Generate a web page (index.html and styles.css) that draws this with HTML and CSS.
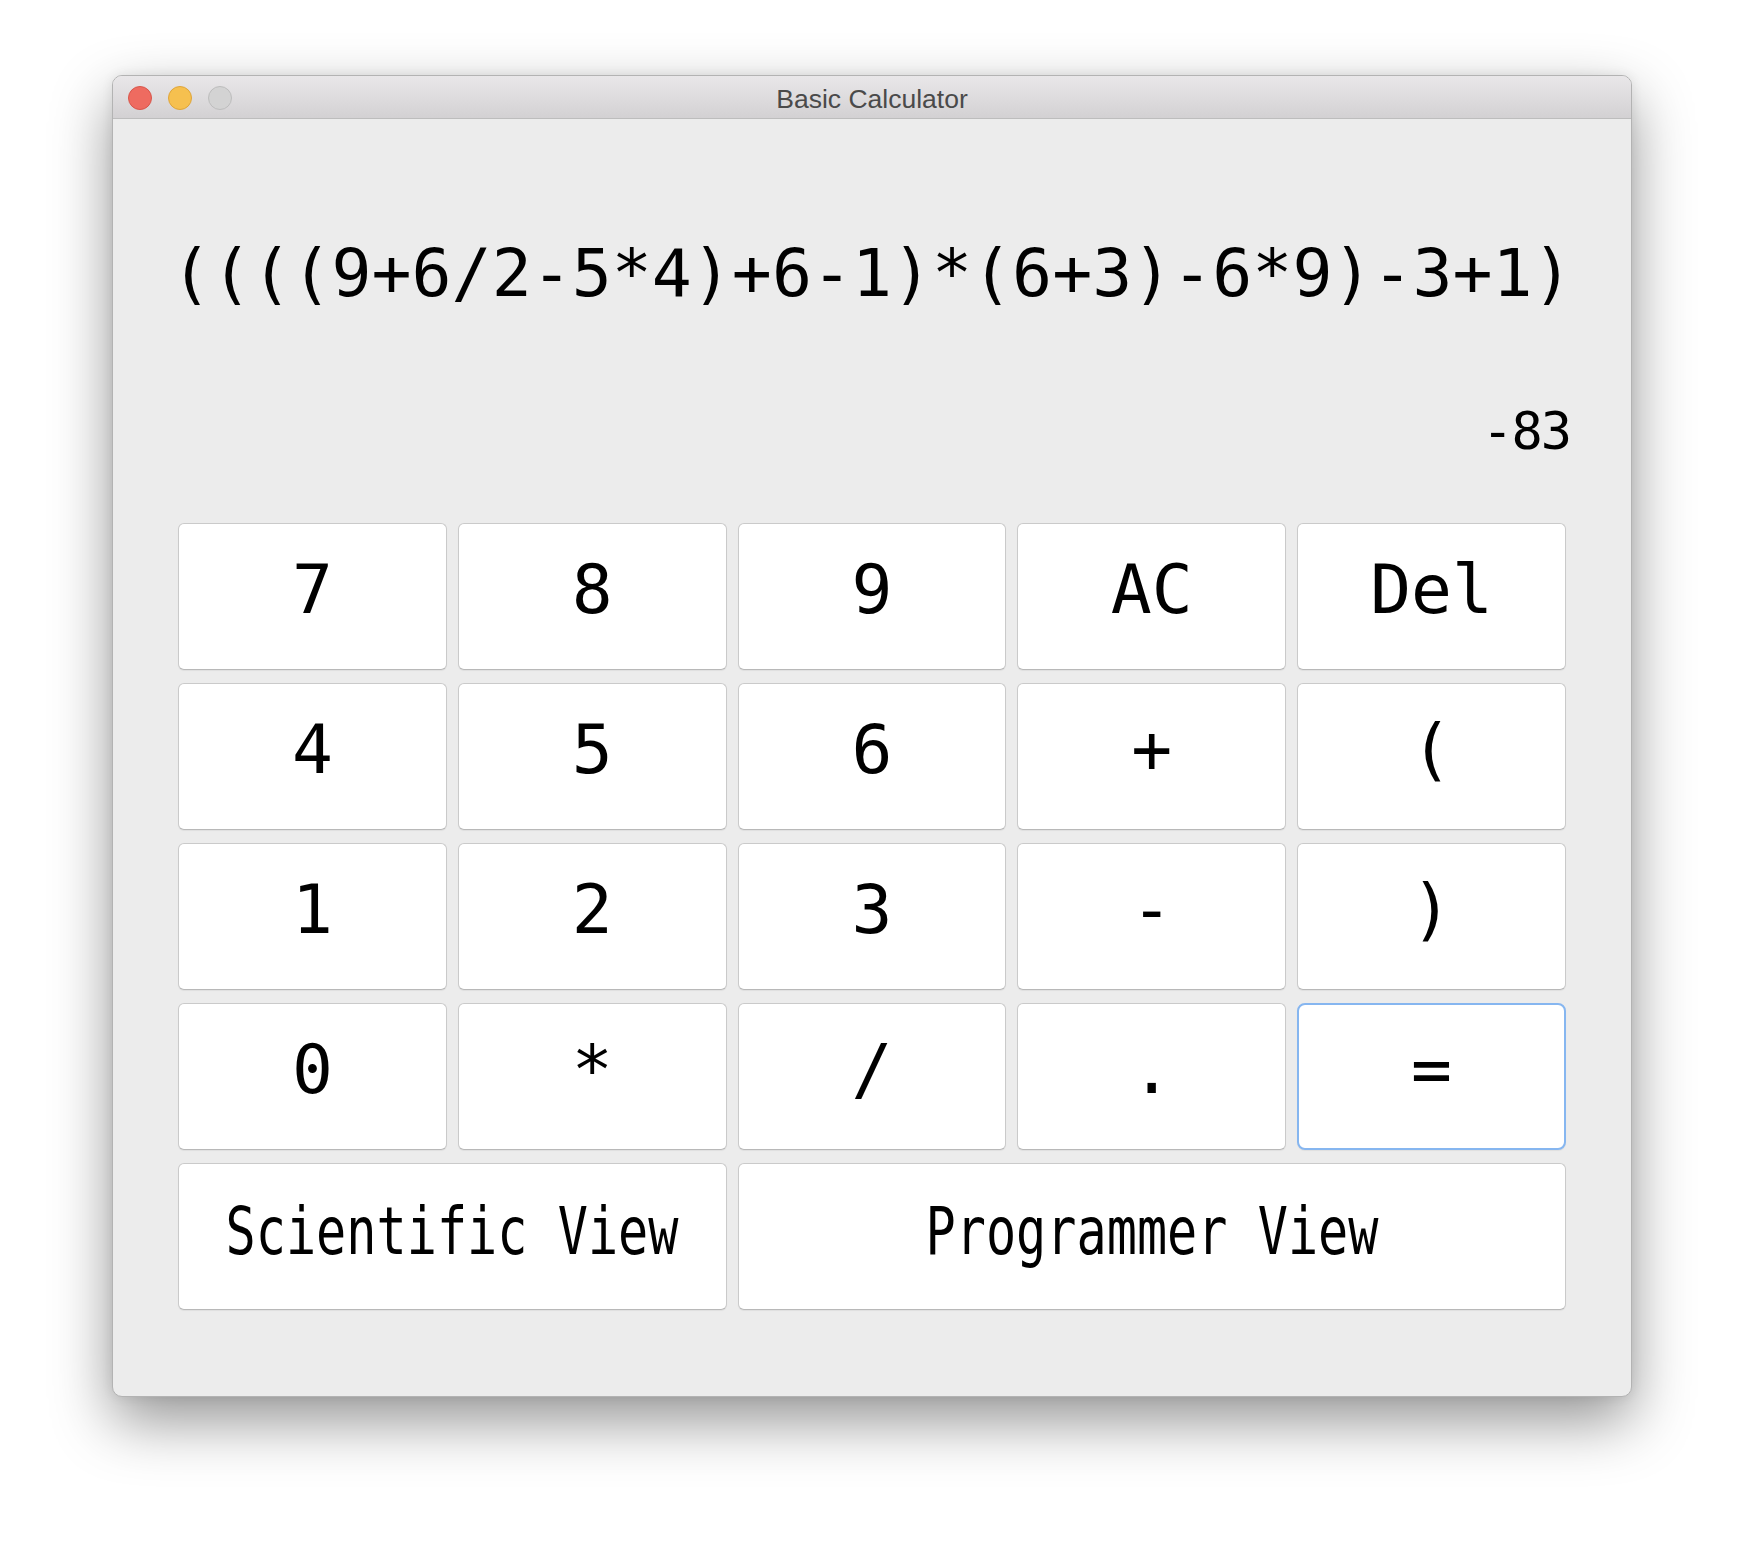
FILE: index.html
```html
<!DOCTYPE html>
<html>
<head>
<meta charset="utf-8">
<title>Basic Calculator</title>
<link rel="stylesheet" href="styles.css">
</head>
<body>
<div class="window">
  <div class="titlebar">
    <div class="lights">
      <span class="light red"></span>
      <span class="light yellow"></span>
      <span class="light gray"></span>
    </div>
    <div class="title">Basic Calculator</div>
    <div class="spacer"></div>
  </div>
  <div class="content">
    <div class="display">
      <div class="expr"><span>((((9+6/2-5*4)+6-1)*(6+3)-6*9)-3+1)</span></div>
      <div class="result">-83</div>
    </div>
    <div class="keys">
      <button class="key"><span>7</span></button>
      <button class="key"><span>8</span></button>
      <button class="key"><span>9</span></button>
      <button class="key"><span>AC</span></button>
      <button class="key"><span>Del</span></button>
      <button class="key"><span>4</span></button>
      <button class="key"><span>5</span></button>
      <button class="key"><span>6</span></button>
      <button class="key"><span>+</span></button>
      <button class="key"><span>(</span></button>
      <button class="key"><span>1</span></button>
      <button class="key"><span>2</span></button>
      <button class="key"><span>3</span></button>
      <button class="key"><span>-</span></button>
      <button class="key"><span>)</span></button>
      <button class="key"><span>0</span></button>
      <button class="key"><span>*</span></button>
      <button class="key"><span>/</span></button>
      <button class="key"><span>.</span></button>
      <button class="key focused"><span>=</span></button>
      <button class="key wide sci"><span class="narrow">Scientific View</span></button>
      <button class="key wide prog"><span class="narrow">Programmer View</span></button>
    </div>
  </div>
</div>
</body>
</html>
```

FILE: styles.css
```css
html, body {
  margin: 0;
  padding: 0;
  background: #ffffff;
}

body {
  padding: 75px 0 0 112px;
  height: 1544px;
  box-sizing: border-box;
  overflow: hidden;
}

.window {
  width: 1520px;
  box-sizing: border-box;
  border: 1px solid #b3b3b3;
  border-radius: 10px;
  background: #ececec;
  box-shadow: 0 24px 60px rgba(0, 0, 0, 0.42), 0 0 12px rgba(0, 0, 0, 0.08);
  overflow: hidden;
}

.titlebar {
  height: 42px;
  border-bottom: 1px solid #bdbdbd;
  background: linear-gradient(#e9e7e9, #d3d1d3);
  display: grid;
  grid-template-columns: 1fr auto 1fr;
  align-items: center;
}

.lights {
  display: flex;
  gap: 16px;
  padding-left: 15px;
  padding-top: 1px;
}

.light {
  width: 22px;
  height: 22px;
  border-radius: 50%;
  border: 1px solid transparent;
}

.light.red {
  background: #ee6b60;
  border-color: #d8564b;
}

.light.yellow {
  background: #f6c04f;
  border-color: #dfa53a;
}

.light.gray {
  background: #d3d3d3;
  border-color: #bdbdbd;
}

.title {
  font-family: "Liberation Sans", Arial, sans-serif;
  font-size: 26.5px;
  color: #4a4a4a;
  padding-top: 5px;
}

.content {
  padding: 0 65px 86px 65px;
}

.display {
  font-family: "DejaVu Sans Mono", monospace;
  color: #000;
}

.expr {
  padding-top: 114px;
  display: flex;
  justify-content: center;
  white-space: nowrap;
  font-size: 66.5px;
  line-height: 80px;
}

.result {
  margin-top: 88px;
  text-align: right;
  font-size: 52px;
  line-height: 60px;
  letter-spacing: -2px;
  margin-right: -4px;
}

.keys {
  margin-top: 62px;
  display: grid;
  grid-template-columns: repeat(5, 1fr);
  grid-auto-rows: 147px;
  column-gap: 11px;
  row-gap: 13px;
}

.key {
  margin: 0;
  padding: 0 0 14px 0;
  background: #ffffff;
  border: 1px solid #cacaca;
  border-bottom-color: #b8b8b8;
  border-radius: 6px;
  box-shadow: 0 1px 1px rgba(0, 0, 0, 0.06);
  font-family: "DejaVu Sans Mono", monospace;
  font-size: 68px;
  line-height: 68px;
  color: #000;
  display: flex;
  align-items: center;
  justify-content: center;
  white-space: nowrap;
}

.key.focused {
  border: 2px solid #86b6f0;
  border-radius: 8px;
}

.key.sci {
  grid-column: span 2;
  padding-bottom: 10px;
}

.key.prog {
  grid-column: span 3;
  padding-bottom: 10px;
}

.narrow {
  display: inline-block;
  font-size: 66px;
  transform: scaleX(0.76);
}
```
